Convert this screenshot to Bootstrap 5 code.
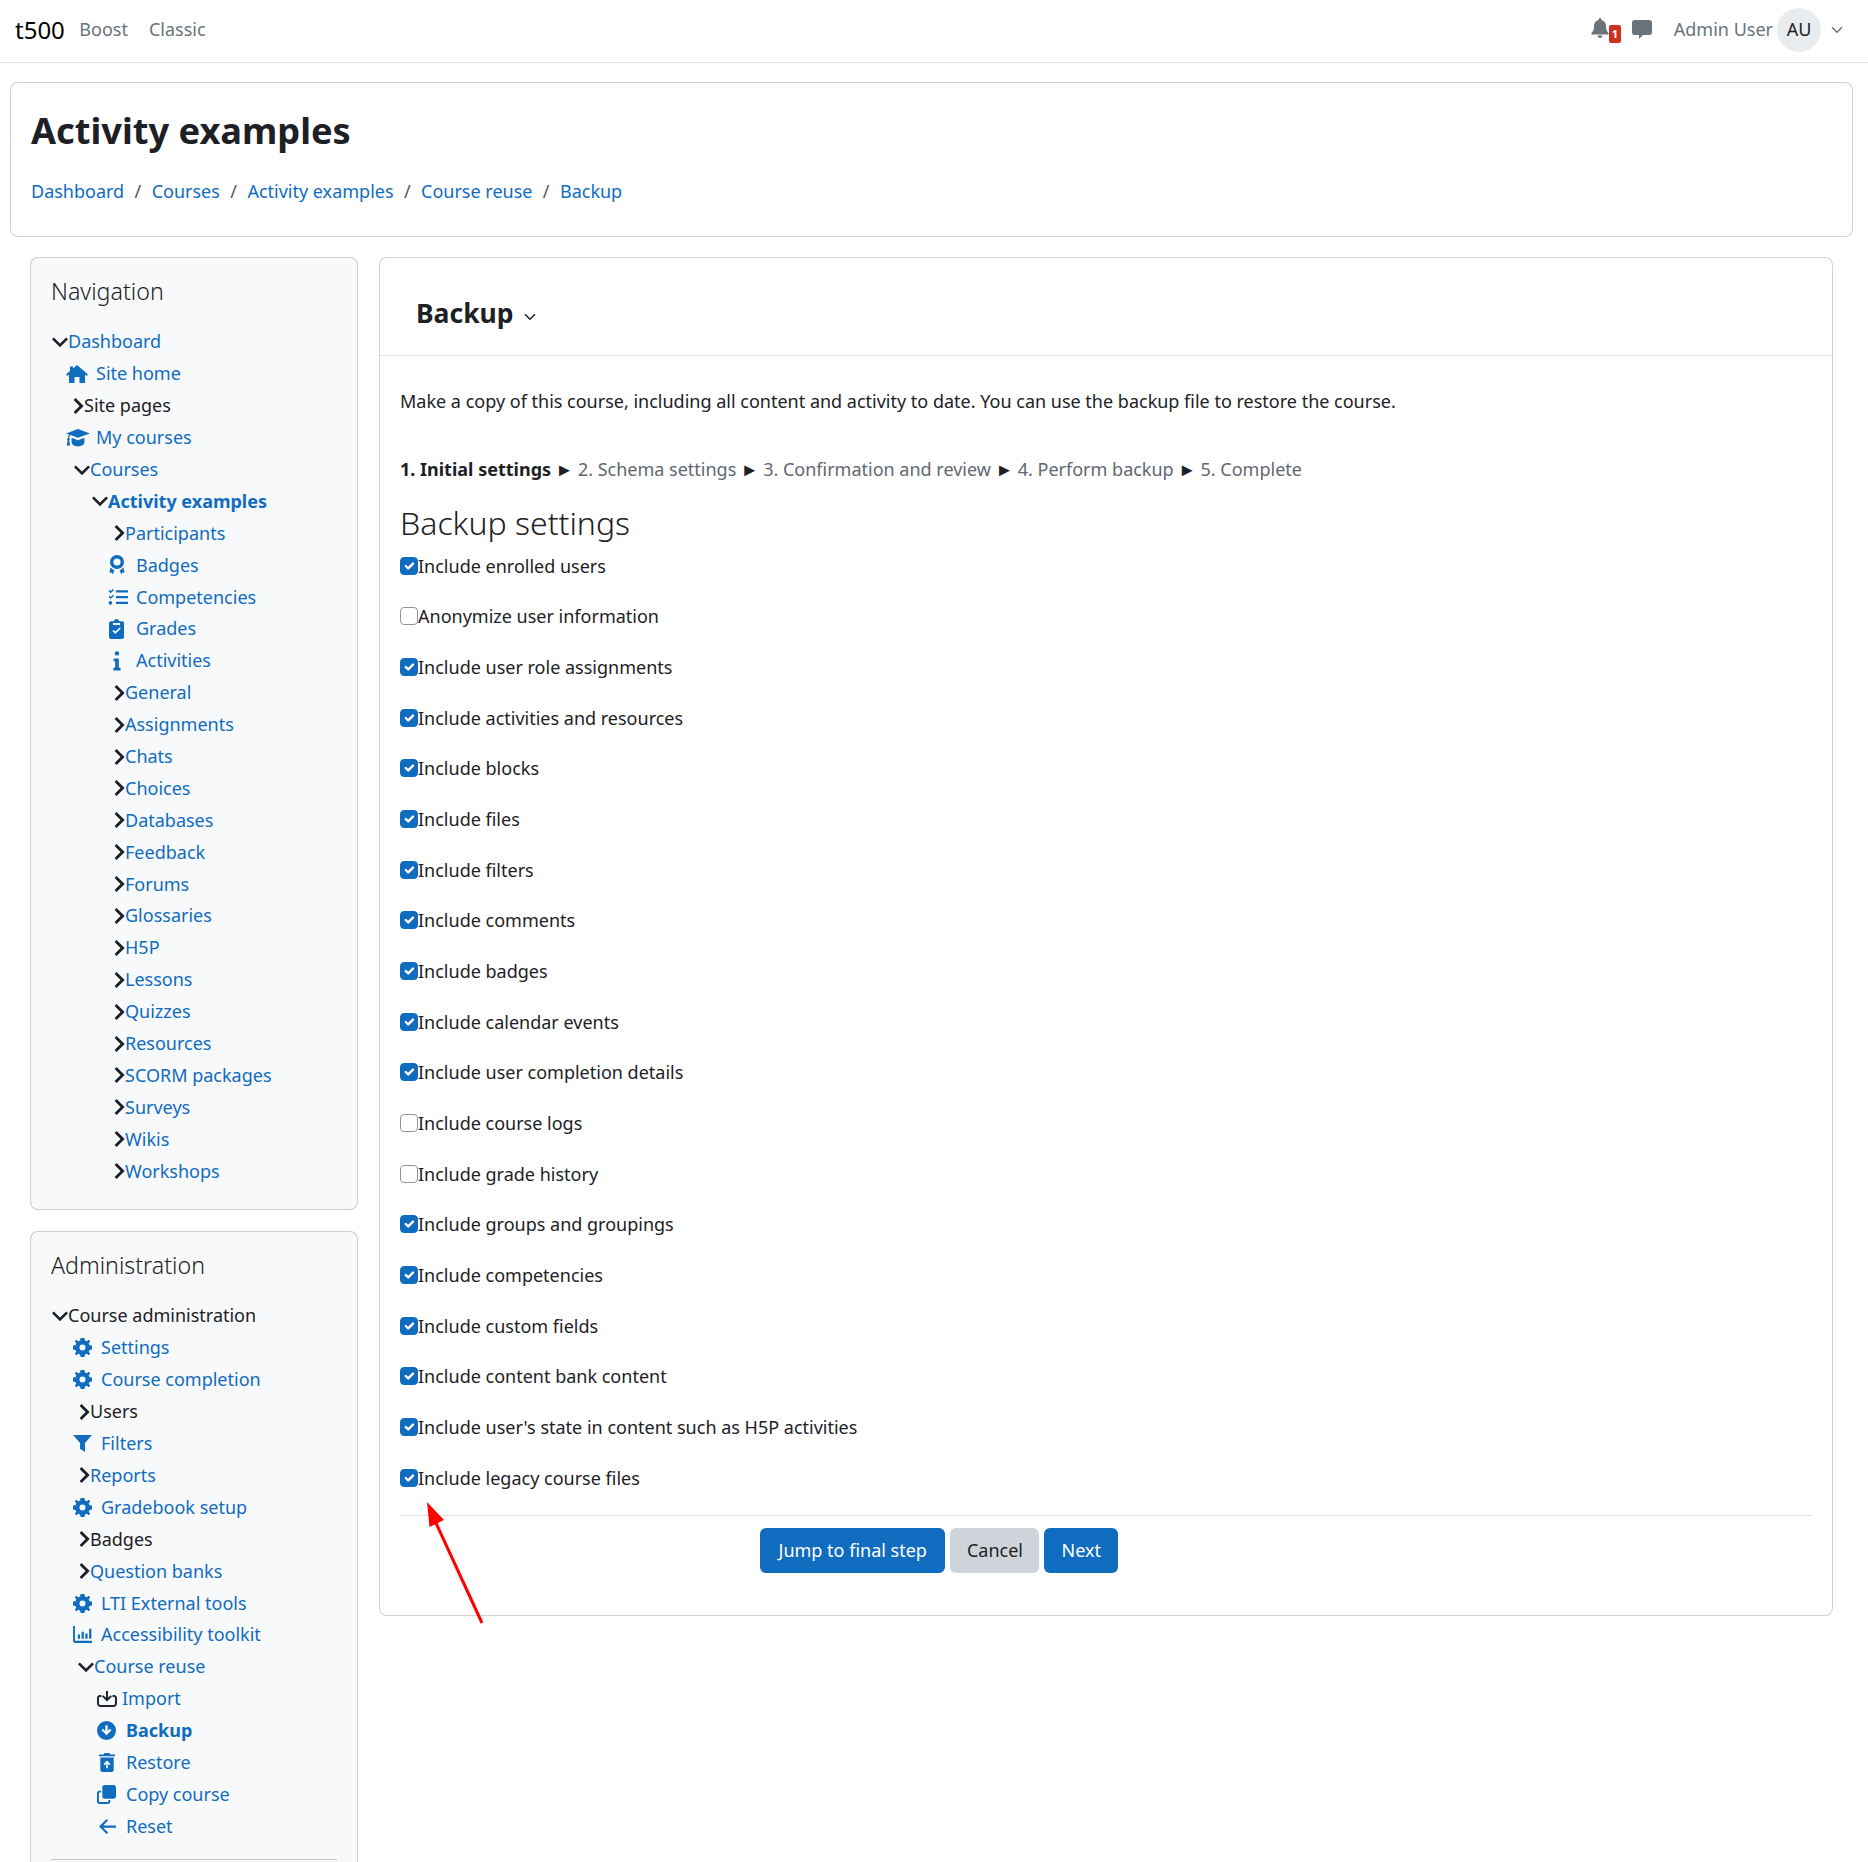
<!DOCTYPE html>
<html lang="en">
<head>
    <meta charset="UTF-8">
    <meta name="viewport" content="width=device-width, initial-scale=1.0">
    <title>Backup</title>
    <link href="https://cdn.jsdelivr.net/npm/bootstrap@5.3.0/dist/css/bootstrap.min.css" rel="stylesheet">
    <style>
        html, body { height: 100%; overflow: hidden; }
        body {
            font-family: "Noto Sans", "Open Sans", sans-serif;
            font-size: 18px;
            color: #1d2125;
            background: #fff;
        }
        a { color: #0f6cbf; text-decoration: none; }
        svg { fill: currentColor; display: block; }

        .top-bar { height: 63px; padding: 0 15px 3px; border-bottom: 1px solid #dee2e6; background: #fff; }
        .top-bar .navbar-brand { font-size: 24px; color: #000; padding: 0; margin-right: 4px; }
        .top-bar .nav-link { padding: 0 10.5px; color: #6a737b; }
        .top-grey { color: #6a737b; }
        .bell-wrap { width: 30px; height: 24px; }
        .bell-count {
            position: absolute; left: 18px; top: 7px; width: 12px; height: 18px;
            background: #ca3120; color: #fff; font-size: 11px; font-weight: 700;
            border-radius: 2px; text-align: center; line-height: 18px;
        }
        .chat-ico { margin-left: 11px; }
        .avatar-au {
            width: 44px; height: 44px; border-radius: 50%; background: #e9ecef; color: #1d2125;
            font-size: 18px; display: flex; align-items: center; justify-content: center;
        }
        .user-name { margin-left: 22px; }
        .user-caret { margin: 0 10px 0 10px; }

        .page-body { position: relative; }
        .head-card { margin: 19px 15px 20px 10px; height: 155px; padding: 22px 20px 0; border-radius: 8px; }
        .head-card h1 { font-size: 36.2px; font-weight: 700; line-height: 50px; margin: 0 0 23px; color: #1d2125; }
        .head-card .breadcrumb { margin: 0; font-size: 18px; line-height: 26px; }
        .head-card .breadcrumb-item + .breadcrumb-item { padding-left: 10.4px; }
        .head-card .breadcrumb-item + .breadcrumb-item::before { padding-right: 10.4px; color: #4f565c; }

        .two-cols { display: flex; gap: 21px; padding: 0 35px 0 30px; align-items: flex-start; }
        .side-col { width: 328px; flex: none; display: flex; flex-direction: column; gap: 21px; }
        .side-block { background: #f8f9fa; border-radius: 8px; padding: 17px 20px 22px; }
        .side-block h5 { font-size: 23.2px; font-weight: 300; line-height: 32px; margin: 0 0 19px; color: #1d2125; }
        .admin-block { height: 800px; }
        .tree-row { display: flex; align-items: center; height: 31.9px; white-space: nowrap; color: #1d2125; }
        .chev-down { width: 16px; flex: none; }
        .chev-right { width: 11px; flex: none; }
        .tree-ico { color: #0f6cbf; flex: none; display: flex; }
        .ico-30 { width: 30px; }
        .ico-29 { width: 29px; }
        .ico-28 { width: 28px; }
        .ico-25 { width: 25px; }
        .shift-1 { margin-left: 1px; }
        .shift-2 { margin-left: 2px; }
        .shift-5 { margin-left: 5px; }
        .in-1 { padding-left: 1px; }
        .in-15 { padding-left: 15px; }
        .in-22 { padding-left: 22px; }
        .in-23 { padding-left: 23px; }
        .in-27 { padding-left: 27px; }
        .in-28 { padding-left: 28px; }
        .in-41 { padding-left: 41px; }
        .in-46 { padding-left: 46px; }
        .in-57 { padding-left: 57px; }
        .in-63 { padding-left: 63px; }
        .tree-rule { border-top: 1px solid #c8c8c8; margin-top: 17px; }

        .main-col { flex: 1; min-width: 0; height: 1359px; border-radius: 8px; padding: 0 20px; }
        .act-head { margin: 0 -20px; padding: 14px 36px 0; height: 98px; border-bottom: 1px solid #e3e5e7; display: flex; align-items: center; gap: 10px; }
        .act-head h2 { font-size: 26.5px; font-weight: 700; margin: 0; color: #1d2125; }
        .act-head svg { margin-top: 6px; }
        .intro-text { margin: 32px 0 0; line-height: 26px; }
        .step-line { margin: 42px 0 0; line-height: 26px; color: #5f6770; }
        .step-line b { color: #1d2125; }
        .step-line i { font-style: normal; color: #1d2125; font-size: 18px; line-height: 1; margin: 0 4.5px; }
        .main-col h3 { font-size: 32px; font-weight: 300; line-height: 44px; margin: 19px 0 0; color: #1d2125; }
        .opt-list { margin-top: 0; }
        .opt-row { display: flex; align-items: center; height: 50.67px; }
        .opt-row label { margin-top: -9px; line-height: 26px; }
        .opt-row .form-check-input {
            width: 18px; height: 18px; margin: -9px 0 0; flex: none;
            border-color: #8f959e; border-radius: 4px;
        }
        .opt-row .form-check-input:checked { background-color: #0f6cbf; border-color: #0f6cbf; }
        .form-foot { border-top: 1px solid #dee2e6; margin-top: 8px; padding-top: 12px; }
        .btn-moodle { background: #0f6cbf; color: #fff; font-size: 18px; height: 45px; padding: 0 17px; border: 0; border-radius: 6px; }
        .btn-grey { background: #ced4da; color: #1d2125; font-size: 18px; height: 45px; padding: 0 16.5px; border: 0; border-radius: 6px; }
        .btn-jump { padding: 0 18.5px; }
        .foot-btns { margin-left: 360px; gap: 5px; }
        .red-arrow { position: absolute; left: 415px; top: 1408px; pointer-events: none; }
    </style>
</head>
<body>
    <svg width="0" height="0" style="position:absolute">
        <symbol id="i-down" viewBox="0 0 16 12"><path d="M1.8 1.4 8 7.6 14.2 1.4 16 3.2 8 11.2 0 3.2z"/></symbol>
        <symbol id="i-right" viewBox="0 0 11 16"><path d="M2.6 0 10.6 8 2.6 16 .6 14 6.6 8 .6 2z"/></symbol>
        <symbol id="i-home" viewBox="0 0 22 18"><path d="M11 0 22 9.4 20.6 11 19 9.6V18H13.5V12H8.5V18H3V9.6L1.4 11 0 9.4 4 6V1.5H7V3.4z"/></symbol>
        <symbol id="i-cap" viewBox="0 0 24 18"><path d="M12 0 24 4.4 12 8.8 4.5 6.1C3.7 7 3.2 8 3 9.2 3.5 9.5 3.8 10 3.8 10.6 3.8 11.1 3.6 11.5 3.2 11.8L4.2 16.6H.6L1.6 11.8C1.2 11.5 1 11.1 1 10.6 1 10 1.3 9.5 1.8 9.2 2 7.7 2.5 6.5 3.3 5.6L0 4.4zM5.6 8.8 12 11.2 18.4 8.8V13.5C18.4 15.5 15.5 17.4 12 17.4S5.6 15.5 5.6 13.5z"/></symbol>
        <symbol id="i-award" viewBox="0 0 16 20"><path fill-rule="evenodd" d="M8 0A7 7 0 0 1 8 14 7 7 0 0 1 8 0zM8 3.4A3.6 3.6 0 1 0 8 10.6 3.6 3.6 0 0 0 8 3.4zM1.5 12.5 4.5 15 5.5 15.2 3.6 19.6 2.6 17.4.4 17.8zM14.5 12.5 15.6 17.8 13.4 17.4 12.4 19.6 10.5 15.2 11.5 15z"/></symbol>
        <symbol id="i-tasks" viewBox="0 0 20 16"><path d="M.5 2 1.6 1 2.7 2.1 5 0 6 1 2.7 4.3zM.5 7.8 1.6 6.8 2.7 7.9 5 5.8 6 6.8 2.7 10.1zM8 1.2H20V3.4H8zM8 7H20V9.2H8zM8 12.8H20V15H8z"/><circle cx="2.4" cy="13.9" r="1.8"/></symbol>
        <symbol id="i-clip" viewBox="0 0 15 20"><path fill-rule="evenodd" d="M5 2.2C5 1 6.1 0 7.5 0S10 1 10 2.2H13C14.1 2.2 15 3.1 15 4.2V18C15 19.1 14.1 20 13 20H2C.9 20 0 19.1 0 18V4.2C0 3.1.9 2.2 2 2.2zM4 4V6H11V4zM3.4 12.1 6.3 15 11.8 9.6 10.6 8.4 6.3 12.6 4.6 10.9z"/></symbol>
        <symbol id="i-info" viewBox="0 0 8 20"><circle cx="4" cy="2.4" r="2.2"/><path d="M.6 7.4H5.8V16.8H7.6V19.6H.4V16.8H2.2V10.2H.6z"/></symbol>
        <symbol id="i-cog" viewBox="0 0 20 20"><path fill-rule="evenodd" d="M8 0H12L12.5 2.6 14.4 3.4 16.6 1.9 18.1 3.4 16.6 5.6 17.4 7.5 20 8V12L17.4 12.5 16.6 14.4 18.1 16.6 16.6 18.1 14.4 16.6 12.5 17.4 12 20H8L7.5 17.4 5.6 16.6 3.4 18.1 1.9 16.6 3.4 14.4 2.6 12.5 0 12V8L2.6 7.5 3.4 5.6 1.9 3.4 3.4 1.9 5.6 3.4 7.5 2.6zM10 6.8A3.2 3.2 0 1 0 10 13.2 3.2 3.2 0 0 0 10 6.8z"/></symbol>
        <symbol id="i-filter" viewBox="0 0 20 18"><path d="M0 0H20L12.6 8.6V18L7.4 14.6V8.6z"/></symbol>
        <symbol id="i-chart" viewBox="0 0 20 18"><path d="M0 0H2V15.6H20V18H2C.9 18 0 17.1 0 16zM5 9H7.4V13.6H5zM9 6H11.4V13.6H9zM13 8H15.4V13.6H13zM17 3H19.4V13.6H17z"/></symbol>
        <symbol id="i-import" viewBox="0 0 20 16"><path d="M9 0H11V6.8L13.6 4.2 15 5.6 10 10.6 5 5.6 6.4 4.2 9 6.8zM0 7C0 5.3 1.3 4 3 4H4.5V6H3C2.4 6 2 6.4 2 7V12.5C2 13.3 2.7 14 3.5 14H16.5C17.3 14 18 13.3 18 12.5V7C18 6.4 17.6 6 17 6H15.5V4H17C18.7 4 20 5.3 20 7V12.5C20 14.4 18.4 16 16.5 16H3.5C1.6 16 0 14.4 0 12.5z"/></symbol>
        <symbol id="i-dl" viewBox="0 0 20 20"><path fill-rule="evenodd" d="M10 0A10 10 0 1 1 10 20 10 10 0 0 1 10 0zM8.8 4.5V10.6L6.4 8.2 4.8 9.8 10 15 15.2 9.8 13.6 8.2 11.2 10.6V4.5z"/></symbol>
        <symbol id="i-restore" viewBox="0 0 17 20"><path fill-rule="evenodd" d="M5.8 0H11.2L12 1.4H17V3.4H0V1.4H5zM1.4 4.8H15.6V18C15.6 19.1 14.7 20 13.6 20H3.4C2.3 20 1.4 19.1 1.4 18zM8.5 8 4.8 11.7 6 12.9 7.6 11.3V16H9.4V11.3L11 12.9 12.2 11.7z"/></symbol>
        <symbol id="i-copy" viewBox="0 0 20 20"><path d="M8 0H17.6C18.9 0 20 1.1 20 2.4V12C20 13.3 18.9 14.4 17.6 14.4H8C6.7 14.4 5.6 13.3 5.6 12V2.4C5.6 1.1 6.7 0 8 0zM0 8.4C0 7 1.1 6 2.4 6H4.4V8H2.4C2.2 8 2 8.2 2 8.4V17.6C2 17.8 2.2 18 2.4 18H11.6C11.8 18 12 17.8 12 17.6V15.8H14V17.6C14 18.9 12.9 20 11.6 20H2.4C1.1 20 0 18.9 0 17.6z"/></symbol>
        <symbol id="i-left" viewBox="0 0 18 16"><path d="M8 0 9.6 1.6 4.4 6.8H18V9.2H4.4L9.6 14.4 8 16 0 8z"/></symbol>
        <symbol id="i-bell" viewBox="0 0 18 20"><path d="M9 0C9.8 0 10.3.6 10.3 1.3V2C13 2.6 15 4.9 15 7.8V9C15 11.2 15.8 13.2 17.3 14.8 18 15.6 17.5 16.6 16.6 16.6H1.4C.5 16.6 0 15.6.7 14.8 2.2 13.2 3 11.2 3 9V7.8C3 4.9 5 2.6 7.7 2V1.3C7.7.6 8.2 0 9 0zM6.6 17.6H11.4C11.4 19 10.3 20 9 20S6.6 19 6.6 17.6z"/></symbol>
        <symbol id="i-chat" viewBox="0 0 20 19"><path d="M2.5 0H17.5C18.9 0 20 1.1 20 2.5V12.5C20 13.9 18.9 15 17.5 15H11L7 19V15H2.5C1.1 15 0 13.9 0 12.5V2.5C0 1.1 1.1 0 2.5 0z"/></symbol>
        <symbol id="i-caret" viewBox="0 0 12 8"><path d="M1 1.2 6 6.2 11 1.2" fill="none" stroke="currentColor" stroke-width="1.5"/></symbol>
    </svg>

    <nav class="navbar top-bar">
        <div class="d-flex align-items-center">
            <a class="navbar-brand" href="#">t500</a>
            <a class="nav-link" href="#">Boost</a>
            <a class="nav-link" href="#">Classic</a>
        </div>
        <div class="d-flex align-items-center top-grey">
            <div class="bell-wrap position-relative"><svg width="18" height="20"><use href="#i-bell"/></svg><span class="bell-count">1</span></div>
            <svg class="chat-ico" width="20" height="19"><use href="#i-chat"/></svg>
            <span class="user-name">Admin User</span>
            <span class="avatar-au ms-1">AU</span>
            <svg class="user-caret" width="12" height="8"><use href="#i-caret"/></svg>
        </div>
    </nav>

    <div class="page-body">
        <div class="card head-card">
            <h1>Activity examples</h1>
            <ol class="breadcrumb">
                <li class="breadcrumb-item"><a href="#">Dashboard</a></li>
                <li class="breadcrumb-item"><a href="#">Courses</a></li>
                <li class="breadcrumb-item"><a href="#">Activity examples</a></li>
                <li class="breadcrumb-item"><a href="#">Course reuse</a></li>
                <li class="breadcrumb-item"><a href="#">Backup</a></li>
            </ol>
        </div>

        <div class="two-cols">
            <div class="side-col">
                <div class="card side-block">
                    <h5>Navigation</h5>
                    <div class="tree-row in-1"><svg class="chev-down" height="12"><use href="#i-down"/></svg><a href="#">Dashboard</a></div>
                    <div class="tree-row in-15"><span class="tree-ico ico-30"><svg width="22" height="18"><use href="#i-home"/></svg></span><a href="#">Site home</a></div>
                    <div class="tree-row in-22"><svg class="chev-right" height="16"><use href="#i-right"/></svg><span>Site pages</span></div>
                    <div class="tree-row in-15"><span class="tree-ico ico-30"><svg width="24" height="18"><use href="#i-cap"/></svg></span><a href="#">My courses</a></div>
                    <div class="tree-row in-23"><svg class="chev-down" height="12"><use href="#i-down"/></svg><a href="#">Courses</a></div>
                    <div class="tree-row in-41"><svg class="chev-down" height="12"><use href="#i-down"/></svg><a href="#" class="fw-bold">Activity examples</a></div>
                    <div class="tree-row in-63"><svg class="chev-right" height="16"><use href="#i-right"/></svg><a href="#">Participants</a></div>
                    <div class="tree-row in-57"><span class="tree-ico ico-28"><svg class="shift-1" width="16" height="20"><use href="#i-award"/></svg></span><a href="#">Badges</a></div>
                    <div class="tree-row in-57"><span class="tree-ico ico-28"><svg width="20" height="16"><use href="#i-tasks"/></svg></span><a href="#">Competencies</a></div>
                    <div class="tree-row in-57"><span class="tree-ico ico-28"><svg class="shift-1" width="15" height="20"><use href="#i-clip"/></svg></span><a href="#">Grades</a></div>
                    <div class="tree-row in-57"><span class="tree-ico ico-28"><svg class="shift-5" width="8" height="20"><use href="#i-info"/></svg></span><a href="#">Activities</a></div>
                    <div class="tree-row in-63"><svg class="chev-right" height="16"><use href="#i-right"/></svg><a href="#">General</a></div>
                    <div class="tree-row in-63"><svg class="chev-right" height="16"><use href="#i-right"/></svg><a href="#">Assignments</a></div>
                    <div class="tree-row in-63"><svg class="chev-right" height="16"><use href="#i-right"/></svg><a href="#">Chats</a></div>
                    <div class="tree-row in-63"><svg class="chev-right" height="16"><use href="#i-right"/></svg><a href="#">Choices</a></div>
                    <div class="tree-row in-63"><svg class="chev-right" height="16"><use href="#i-right"/></svg><a href="#">Databases</a></div>
                    <div class="tree-row in-63"><svg class="chev-right" height="16"><use href="#i-right"/></svg><a href="#">Feedback</a></div>
                    <div class="tree-row in-63"><svg class="chev-right" height="16"><use href="#i-right"/></svg><a href="#">Forums</a></div>
                    <div class="tree-row in-63"><svg class="chev-right" height="16"><use href="#i-right"/></svg><a href="#">Glossaries</a></div>
                    <div class="tree-row in-63"><svg class="chev-right" height="16"><use href="#i-right"/></svg><a href="#">H5P</a></div>
                    <div class="tree-row in-63"><svg class="chev-right" height="16"><use href="#i-right"/></svg><a href="#">Lessons</a></div>
                    <div class="tree-row in-63"><svg class="chev-right" height="16"><use href="#i-right"/></svg><a href="#">Quizzes</a></div>
                    <div class="tree-row in-63"><svg class="chev-right" height="16"><use href="#i-right"/></svg><a href="#">Resources</a></div>
                    <div class="tree-row in-63"><svg class="chev-right" height="16"><use href="#i-right"/></svg><a href="#">SCORM packages</a></div>
                    <div class="tree-row in-63"><svg class="chev-right" height="16"><use href="#i-right"/></svg><a href="#">Surveys</a></div>
                    <div class="tree-row in-63"><svg class="chev-right" height="16"><use href="#i-right"/></svg><a href="#">Wikis</a></div>
                    <div class="tree-row in-63"><svg class="chev-right" height="16"><use href="#i-right"/></svg><a href="#">Workshops</a></div>
                </div>

                <div class="card side-block admin-block">
                    <h5>Administration</h5>
                    <div class="tree-row in-1"><svg class="chev-down" height="12"><use href="#i-down"/></svg><span>Course administration</span></div>
                    <div class="tree-row in-22"><span class="tree-ico ico-28"><svg width="19" height="19"><use href="#i-cog"/></svg></span><a href="#">Settings</a></div>
                    <div class="tree-row in-22"><span class="tree-ico ico-28"><svg width="19" height="19"><use href="#i-cog"/></svg></span><a href="#">Course completion</a></div>
                    <div class="tree-row in-28"><svg class="chev-right" height="16"><use href="#i-right"/></svg><span>Users</span></div>
                    <div class="tree-row in-22"><span class="tree-ico ico-28"><svg width="19" height="17"><use href="#i-filter"/></svg></span><a href="#">Filters</a></div>
                    <div class="tree-row in-28"><svg class="chev-right" height="16"><use href="#i-right"/></svg><a href="#">Reports</a></div>
                    <div class="tree-row in-22"><span class="tree-ico ico-28"><svg width="19" height="19"><use href="#i-cog"/></svg></span><a href="#">Gradebook setup</a></div>
                    <div class="tree-row in-28"><svg class="chev-right" height="16"><use href="#i-right"/></svg><span>Badges</span></div>
                    <div class="tree-row in-28"><svg class="chev-right" height="16"><use href="#i-right"/></svg><a href="#">Question banks</a></div>
                    <div class="tree-row in-22"><span class="tree-ico ico-28"><svg width="19" height="19"><use href="#i-cog"/></svg></span><a href="#">LTI External tools</a></div>
                    <div class="tree-row in-22"><span class="tree-ico ico-28"><svg width="19" height="17"><use href="#i-chart"/></svg></span><a href="#">Accessibility toolkit</a></div>
                    <div class="tree-row in-27"><svg class="chev-down" height="12"><use href="#i-down"/></svg><a href="#">Course reuse</a></div>
                    <div class="tree-row in-46"><span class="tree-ico ico-25 text-dark"><svg width="20" height="16"><use href="#i-import"/></svg></span><a href="#">Import</a></div>
                    <div class="tree-row in-46"><span class="tree-ico ico-29"><svg width="19" height="19"><use href="#i-dl"/></svg></span><a href="#" class="fw-bold">Backup</a></div>
                    <div class="tree-row in-46"><span class="tree-ico ico-29"><svg class="shift-2" width="16" height="19"><use href="#i-restore"/></svg></span><a href="#">Restore</a></div>
                    <div class="tree-row in-46"><span class="tree-ico ico-29"><svg width="19" height="19"><use href="#i-copy"/></svg></span><a href="#">Copy course</a></div>
                    <div class="tree-row in-46"><span class="tree-ico ico-29"><svg class="shift-2" width="17" height="15"><use href="#i-left"/></svg></span><a href="#">Reset</a></div>
                    <div class="tree-rule"></div>
                </div>
            </div>

            <div class="card main-col">
                <div class="act-head">
                    <h2>Backup</h2>
                    <svg width="12" height="8"><use href="#i-caret"/></svg>
                </div>
                <p class="intro-text">Make a copy of this course, including all content and activity to date. You can use the backup file to restore the course.</p>
                <p class="step-line"><b>1. Initial settings</b><i>►</i>2. Schema settings<i>►</i>3. Confirmation and review<i>►</i>4. Perform backup<i>►</i>5. Complete</p>
                <h3>Backup settings</h3>
                <div class="opt-list">
                    <div class="opt-row"><input class="form-check-input" type="checkbox" id="o1" checked><label for="o1">Include enrolled users</label></div>
                    <div class="opt-row"><input class="form-check-input" type="checkbox" id="o2"><label for="o2">Anonymize user information</label></div>
                    <div class="opt-row"><input class="form-check-input" type="checkbox" id="o3" checked><label for="o3">Include user role assignments</label></div>
                    <div class="opt-row"><input class="form-check-input" type="checkbox" id="o4" checked><label for="o4">Include activities and resources</label></div>
                    <div class="opt-row"><input class="form-check-input" type="checkbox" id="o5" checked><label for="o5">Include blocks</label></div>
                    <div class="opt-row"><input class="form-check-input" type="checkbox" id="o6" checked><label for="o6">Include files</label></div>
                    <div class="opt-row"><input class="form-check-input" type="checkbox" id="o7" checked><label for="o7">Include filters</label></div>
                    <div class="opt-row"><input class="form-check-input" type="checkbox" id="o8" checked><label for="o8">Include comments</label></div>
                    <div class="opt-row"><input class="form-check-input" type="checkbox" id="o9" checked><label for="o9">Include badges</label></div>
                    <div class="opt-row"><input class="form-check-input" type="checkbox" id="o10" checked><label for="o10">Include calendar events</label></div>
                    <div class="opt-row"><input class="form-check-input" type="checkbox" id="o11" checked><label for="o11">Include user completion details</label></div>
                    <div class="opt-row"><input class="form-check-input" type="checkbox" id="o12"><label for="o12">Include course logs</label></div>
                    <div class="opt-row"><input class="form-check-input" type="checkbox" id="o13"><label for="o13">Include grade history</label></div>
                    <div class="opt-row"><input class="form-check-input" type="checkbox" id="o14" checked><label for="o14">Include groups and groupings</label></div>
                    <div class="opt-row"><input class="form-check-input" type="checkbox" id="o15" checked><label for="o15">Include competencies</label></div>
                    <div class="opt-row"><input class="form-check-input" type="checkbox" id="o16" checked><label for="o16">Include custom fields</label></div>
                    <div class="opt-row"><input class="form-check-input" type="checkbox" id="o17" checked><label for="o17">Include content bank content</label></div>
                    <div class="opt-row"><input class="form-check-input" type="checkbox" id="o18" checked><label for="o18">Include user's state in content such as H5P activities</label></div>
                    <div class="opt-row"><input class="form-check-input" type="checkbox" id="o19" checked><label for="o19">Include legacy course files</label></div>
                </div>
                <div class="form-foot">
                    <div class="d-flex foot-btns">
                        <button class="btn btn-moodle btn-jump">Jump to final step</button>
                        <button class="btn btn-grey">Cancel</button>
                        <button class="btn btn-moodle">Next</button>
                    </div>
                </div>
            </div>
        </div>

        <svg class="red-arrow" width="80" height="140" viewBox="0 0 80 140">
            <path d="M67 133 21 33" stroke="#f00" stroke-width="3" fill="none"/>
            <path d="M12 12 29 30 14.5 37z" fill="#f00"/>
        </svg>
    </div>

    <script src="https://cdn.jsdelivr.net/npm/bootstrap@5.3.0/dist/js/bootstrap.bundle.min.js"></script>
</body>
</html>
